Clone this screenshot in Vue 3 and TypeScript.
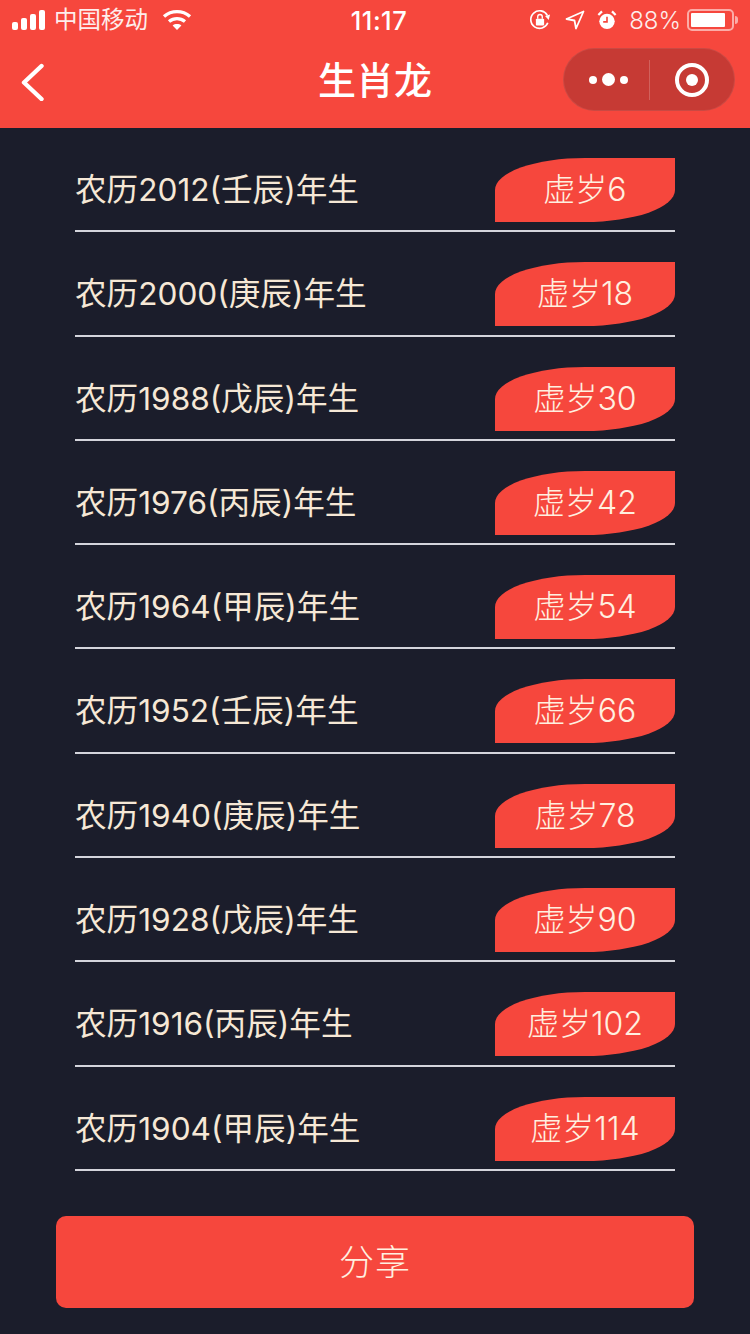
<script setup lang="ts">
interface Row { label: string; age: string }
const rows: Row[] = [
  { label: '农历2012(壬辰)年生', age: '虚岁6' },
  { label: '农历2000(庚辰)年生', age: '虚岁18' },
  { label: '农历1988(戊辰)年生', age: '虚岁30' },
  { label: '农历1976(丙辰)年生', age: '虚岁42' },
  { label: '农历1964(甲辰)年生', age: '虚岁54' },
  { label: '农历1952(壬辰)年生', age: '虚岁66' },
  { label: '农历1940(庚辰)年生', age: '虚岁78' },
  { label: '农历1928(戊辰)年生', age: '虚岁90' },
  { label: '农历1916(丙辰)年生', age: '虚岁102' },
  { label: '农历1904(甲辰)年生', age: '虚岁114' },
]
</script>

<template>
  <div class="page">
    <header class="top">
      <div class="status">
        <div class="status-left">
          <svg class="signal" width="34" height="22" viewBox="0 0 34 22">
            <rect x="0" y="13" width="6" height="8" rx="2" fill="#fff" />
            <rect x="9" y="9" width="6" height="12" rx="2" fill="#fff" />
            <rect x="18" y="5" width="6" height="16" rx="2" fill="#fff" />
            <rect x="27" y="1" width="6" height="20" rx="2" fill="#fff" />
          </svg>
          <span class="carrier">中国移动</span>
          <svg class="wifi" width="30" height="22" viewBox="0 0 30 22" fill="none" stroke="#fff" stroke-width="3.4">
            <path d="M2 7.5C9.5 1 20.5 1 28 7.5" />
            <path d="M7 12.5C11.8 8.6 18.2 8.6 23 12.5" />
            <path d="M15 21L10.6 16.4C13 14.5 17 14.5 19.4 16.4Z" fill="#fff" stroke="none" />
          </svg>
        </div>
        <div class="time">11:17</div>
        <div class="status-right">
          <svg width="22" height="22" viewBox="0 0 24 24" fill="none">
            <path d="M20.5 15A9.6 9.6 0 1 1 20 7" stroke="#fff" stroke-width="1.8" />
            <path d="M17.5 7.5L23 6L21.5 12Z" fill="#fff" />
            <rect x="7.5" y="10.5" width="9" height="7.5" rx="1" fill="#fff" />
            <path d="M9.5 10.5V8.5a2.5 2.5 0 0 1 5 0v2" stroke="#fff" stroke-width="1.5" />
          </svg>
          <svg class="arrow" width="20" height="20" viewBox="0 0 20 20" fill="none">
            <path d="M1.5 9L18.5 1.5L11 18.5L9.5 10.5Z" stroke="#fff" stroke-width="1.8" stroke-linejoin="round" />
          </svg>
          <svg class="alarm" width="20" height="20" viewBox="0 0 22 22" fill="none">
            <circle cx="11" cy="12.5" r="8.5" fill="#fff" />
            <path d="M11 7.5V13H6.8" stroke="#f6473d" stroke-width="1.8" />
            <path d="M1.5 5.5L5.5 1.5M20.5 5.5L16.5 1.5" stroke="#fff" stroke-width="2.4" />
          </svg>
          <span class="percent">88%</span>
          <div class="battery"><div class="battery-fill"></div></div>
          <div class="battery-nub"></div>
        </div>
      </div>
      <div class="nav">
        <div class="nav-left">
          <svg width="24" height="38" viewBox="0 0 24 38" fill="none">
            <path d="M21.5 3L4 19.5L21.5 36" stroke="#fff" stroke-width="4.4" stroke-linecap="round" stroke-linejoin="round" />
          </svg>
        </div>
        <h1 class="title">生肖龙</h1>
        <div class="nav-right">
          <div class="capsule">
            <div class="more">
              <span class="dot"></span>
              <span class="dot big"></span>
              <span class="dot"></span>
            </div>
            <div class="divider"></div>
            <div class="target"><span class="target-core"></span></div>
          </div>
        </div>
      </div>
    </header>

    <main class="list">
      <div v-for="row in rows" :key="row.label" class="row">
        <span class="label">{{ row.label }}</span>
        <span class="tag">{{ row.age }}</span>
      </div>
    </main>

    <div class="footer">
      <button class="share" type="button">分享</button>
    </div>
  </div>
</template>

<style>
html, body { margin: 0; background: #1b1d2b; }
</style>

<style scoped>
.page {
  width: 750px;
  height: 1334px;
  display: flex;
  flex-direction: column;
  background: #1b1d2b;
  font-family: "Inter", "Noto Sans CJK SC", sans-serif;
  overflow: hidden;
}
.top { height: 128px; background: #f6473d; color: #fff; flex: none; }
.status {
  height: 40px;
  display: grid;
  grid-template-columns: 1fr auto 1fr;
  align-items: center;
  padding: 0 12px;
  box-sizing: border-box;
}
.status-left { display: flex; align-items: center; }
.signal { margin-right: 8px; }
.carrier { font-size: 23.5px; line-height: 40px; opacity: .9; }
.wifi { margin-left: 14px; }
.time { font-size: 25.5px; font-weight: 500; letter-spacing: .5px; margin-left: 8px; }
.status-right { display: flex; align-items: center; justify-content: flex-end; }
.arrow { margin-left: 14px; }
.alarm { margin-left: 12px; }
.percent {
  font-size: 24px;
  font-weight: 300;
  margin-left: 12px;
  opacity: .9;
}
.battery {
  width: 47px;
  height: 22px;
  margin-left: 6px;
  box-sizing: border-box;
  border: 2px solid rgba(255, 255, 255, .55);
  border-radius: 5px;
  padding: 2px;
}
.battery-fill { width: 88%; height: 100%; background: #fff; border-radius: 1px; }
.battery-nub {
  width: 3px;
  height: 8px;
  margin-left: 1px;
  background: rgba(255, 255, 255, .55);
  border-radius: 0 3px 3px 0;
}
.nav {
  height: 88px;
  display: grid;
  grid-template-columns: 1fr auto 1fr;
  grid-template-rows: 88px;
  align-items: start;
}
.nav-left { padding: 23px 0 0 20px; display: flex; align-items: center; }
.title {
  margin: 0;
  font-size: 38px;
  font-weight: 500;
  line-height: 81px;
  color: #fff;
}
.nav-right { display: flex; justify-content: flex-end; padding: 8px 15px 0 0; }
.capsule {
  width: 172px;
  height: 63px;
  box-sizing: border-box;
  border: 1px solid rgba(255, 255, 255, .08);
  border-radius: 32px;
  background: #c63a34;
  display: flex;
  align-items: center;
}
.more { width: 85px; display: flex; align-items: center; justify-content: center; gap: 5px; padding-left: 4px; box-sizing: border-box; }
.dot { width: 8px; height: 8px; border-radius: 50%; background: #fff; }
.dot.big { width: 13px; height: 13px; }
.divider { width: 1px; height: 40px; background: rgba(255, 255, 255, .2); }
.target {
  width: 34px;
  height: 34px;
  margin-left: 25px;
  box-sizing: border-box;
  border: 4.5px solid #fff;
  border-radius: 50%;
  display: flex;
  align-items: center;
  justify-content: center;
}
.target-core { width: 12px; height: 12px; border-radius: 50%; background: #fff; }
.list { padding: 0 75px; flex: none; }
.row {
  height: 104.3px;
  box-sizing: border-box;
  padding-top: 30px;
  border-bottom: 2px solid #d4d4dc;
  display: flex;
  justify-content: space-between;
  align-items: flex-start;
}
.label {
  font-size: 31.6px;
  line-height: 64px;
  color: #f6e8d6;
  font-weight: 400;
}
.tag {
  width: 180px;
  height: 64px;
  background: #f6473d;
  border-radius: 50% 0;
  color: #fff0e0;
  font-size: 32px;
  font-weight: 300;
  line-height: 64px;
  text-align: center;
}
.footer { flex: none; padding: 45px 56px 0; }
.share {
  display: block;
  width: 638px;
  height: 92px;
  border: 0;
  border-radius: 10px;
  background: #f6473d;
  color: #fff0e0;
  font-family: inherit;
  font-size: 35px;
  font-weight: 300;
  letter-spacing: 1px;
  padding: 0 0 5px;
}
</style>
